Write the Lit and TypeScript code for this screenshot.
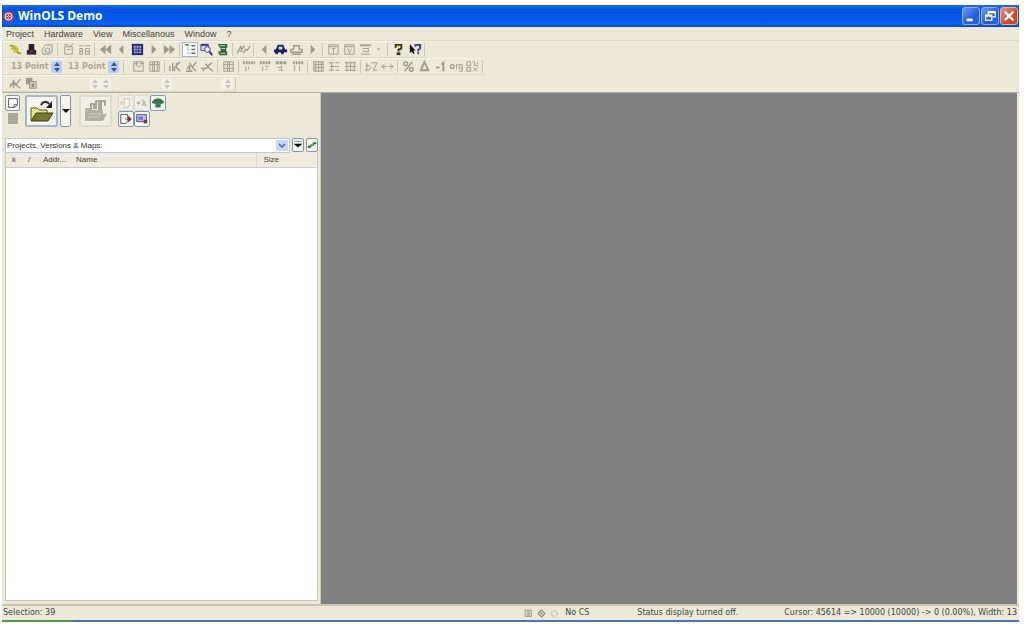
import { LitElement, html, css, svg, nothing } from "lit";
import { customElement, property } from "lit/decorators.js";

const G = "#9d9b8d";

/* Glyphs on a 16 x 16 grid. */
const glyphs: Record<string, unknown> = {
  plug: svg`<path d="M2 4h3l2 3 3 1v3l2 1h2" fill="none" stroke="#a3a524" stroke-width="2"/><path d="M3 7l4 1M6 11l4-4M7 4l4 4" stroke="#c2c433" stroke-width="2"/>`,
  hat: svg`<path d="M5 2h6v6l2 1v4H3V9l2-1z" fill="#2a2326"/><path d="M6 9h4v2H6z" fill="#7d3b3b"/><path d="M3 13h10" stroke="#4a4446"/>`,
  disc: svg`<path d="M2 8l4-5h7v8l-3 2H3z" fill="#e3e0d0" stroke="${G}"/><circle cx="8" cy="9" r="2.500" fill="none" stroke="${G}"/>`,
  props: svg`<path d="M4 5h8v8H4zM3 3h5M9 5l4-3M6 8h4" fill="none" stroke="${G}"/>`,
  pages: svg`<path d="M3 7h3v6H3zM9 7h4v6H9zM2 4h5M8 4h6M3 10h3M9 10h4" fill="none" stroke="${G}"/>`,
  first: svg`<path d="M8 3v10L2 8zM14 3v10L8 8z" fill="${G}"/>`,
  prev: svg`<path d="M10 3v10L5 8z" fill="${G}"/>`,
  next: svg`<path d="M6 3v10l5-5z" fill="${G}"/>`,
  last: svg`<path d="M2 3v10l6-5zM8 3v10l6-5z" fill="${G}"/>`,
  grid: svg`<path d="M2 2h12v12H2z" fill="#24256a"/><path d="M4 4h2v2H4zM7 4h2v2H7zM10 4h2v2h-2zM4 7h2v2H4zM7 7h2v2H7zM10 7h2v2h-2zM4 10h2v2H4zM7 10h2v2H7zM10 10h2v2h-2z" fill="#b3b8e4"/>`,
  tree: svg`<path d="M5 3v10M5 4h3M5 8h3M5 12h3" fill="none" stroke="#8b98a0" stroke-dasharray="1 1"/><path d="M2 3h4M9 4h4M9 8h4M9 12h4" stroke="#59656c" stroke-width="1.500"/>`,
  search: svg`<path d="M2 3h8v6H2z" fill="#d5d6ec" stroke="#4d4d83"/><path d="M2 3h8" stroke="#34347b" stroke-width="2"/><circle cx="9" cy="8" r="3" fill="#eef" stroke="#34347b"/><path d="M11 10l3 4" stroke="#34347b" stroke-width="2"/>`,
  scroll: svg`<path d="M3 2h10v4H5zM6 6h6v4H6zM3 10h10v4H5z" fill="#345f38"/><path d="M7 7h4M6 12h5M5 4h6" stroke="#d7e6c9"/>`,
  signal: svg`<path d="M1 12l4-7 1 3 3-4M8 12l2-4 2 1 3-5M4 10h3" fill="none" stroke="${G}" stroke-width="1.500"/>`,
  car: svg`<path d="M5 3h6l2 5h2v3h-3l-1 2h-2l-1-2H6l-1 2H3l-1-2H1V8h2z" fill="#20205e"/><path d="M6 5h4v3H6z" fill="#d5d8ee"/>`,
  carOff: svg`<path d="M5 4h6v4h3v3H2V8h3zM3 13h10" fill="none" stroke="${G}" stroke-width="1.500"/>`,
  winA: svg`<path d="M3 3h10v10H3zM3 5h10M6 7h4M8 7v5" fill="none" stroke="${G}"/>`,
  winB: svg`<path d="M3 3h10v10H3zM3 5h10M6 7l2 5 2-5" fill="none" stroke="${G}"/>`,
  winC: svg`<path d="M2 3h12M2 4h12M5 7h6M5 10h6M3 13h10M11 6v5" fill="none" stroke="${G}"/>`,
  dot: svg`<path d="M5 7h4l-2 2z" fill="${G}"/>`,
  help: svg`<path d="M5 6V3h6v4L8 8v2" fill="none" stroke="#34351f" stroke-width="2"/><path d="M6 11h4v3H6z" fill="#34351f"/><path d="M7 4h2v2H7z" fill="#d8d86c"/>`,
  whats: svg`<path d="M3 2v10l2-2 2 3 1-1-1-3h2z" fill="#111"/><path d="M9 5V3h5v4l-2 1v2M12 11v2" fill="none" stroke="#3e3a86" stroke-width="2"/>`,
  map: svg`<path d="M3 3h10v10H3zM3 5h4M9 5h4M6 3v4l3 2 2-3" fill="none" stroke="${G}"/>`,
  cols: svg`<path d="M3 3h10v10H3zM3 6h10M6 3v10M8 3v10M11 3v10" fill="none" stroke="${G}"/>`,
  barA: svg`<path d="M2 7v6M5 4v9M7 8v5M8 8l5-5M8 8l5 5M9 4v4" fill="none" stroke="${G}" stroke-width="1.500"/>`,
  barB: svg`<path d="M3 11l3-4v6M6 4l3 5 4-6M9 9l4 4M2 13h7" fill="none" stroke="${G}" stroke-width="1.500"/>`,
  barC: svg`<path d="M1 10h6l2-3 4-3M6 5l3 4 5 4M5 9l-2 4" fill="none" stroke="${G}" stroke-width="1.500"/>`,
  table: svg`<path d="M3 3h10v10H3zM3 6h10M3 10h10M7 3v10M9 3v10" fill="none" stroke="${G}"/>`,
  bitA: svg`<path d="M1 4h13" stroke="${G}" stroke-width="3" stroke-dasharray="2 1"/><path d="M4 8v5M7 8v3" stroke="${G}"/>`,
  bitB: svg`<path d="M2 4h12" stroke="${G}" stroke-width="3" stroke-dasharray="2 1"/><path d="M5 8v5M8 8h3M8 11h2" stroke="${G}"/>`,
  bitC: svg`<path d="M2 4h11" stroke="${G}" stroke-width="3" stroke-dasharray="3 1"/><path d="M4 9h3M5 12h5M8 7v4" stroke="${G}"/>`,
  bitD: svg`<path d="M3 4h11" stroke="${G}" stroke-width="3" stroke-dasharray="2 1"/><path d="M5 7v6M10 7v6" stroke="${G}"/>`,
  mesh: svg`<path d="M3 3h10v10H3zM3 6h10M3 9h10M5 3v10M8 3v10M11 3v10" fill="none" stroke="${G}"/>`,
  split: svg`<path d="M2 4h5M9 4h4M3 8h10M2 12h5M9 12h4M5 4v8" fill="none" stroke="${G}"/>`,
  bars: svg`<path d="M4 3v10M8 3v10M12 3v10M2 4h12M2 8h12M2 12h12" fill="none" stroke="${G}"/>`,
  wave: svg`<path d="M3 4v8M1 12h4l3-4M7 4h7l-4 8h4M2 7h4" fill="none" stroke="${G}"/>`,
  both: svg`<path d="M1 8h6M9 8h5M5 5L2 8l3 3M11 5l3 3-3 3" fill="none" stroke="${G}"/>`,
  percent: svg`<circle cx="5" cy="5" r="2" fill="none" stroke="${G}" stroke-width="1.500"/><circle cx="11" cy="11" r="2" fill="none" stroke="${G}" stroke-width="1.500"/><path d="M12 3L4 13" stroke="${G}" stroke-width="1.500"/>`,
  delta: svg`<path d="M8 3l4 9H4z" fill="none" stroke="${G}" stroke-width="2"/>`,
  minus: svg`<path d="M3 9h4M9 6l2-2v9" fill="none" stroke="${G}" stroke-width="2"/>`,
  org: svg`<circle cx="3.500" cy="8" r="2" fill="none" stroke="${G}" stroke-width="1.500"/><path d="M8 11V6h2M14 6h-3v4h3M14 6v7h-3" fill="none" stroke="${G}"/>`,
  diff: svg`<path d="M2 3h4v4H2zM2 9h4v4H2zM8 3h2v4h4M9 9l4 4M13 3v3M13 9l-4 4" fill="none" stroke="${G}"/>`,
  pen: svg`<path d="M2 12l4-6v7M5 5l4 4 4-6M8 9l5 4M2 9h7" fill="none" stroke="${G}" stroke-width="1.500"/>`,
  copy: svg`<path d="M2 2h7v7H2z" fill="${G}"/><path d="M6 6h7v7H6z" fill="#dcd9c9" stroke="#8d8b7d"/><path d="M8 8h3v4H8z" fill="#8d8b7d"/>`,
  doc: svg`<path d="M3 3h10v7l-3 3H3z" fill="#fff" stroke="#444"/><path d="M9 13v-3h4" fill="none" stroke="#444"/>`,
  cut: svg`<path d="M6 3h6v7l-2 3H6zM1 8h4M3 6v4" fill="#f5f3ea" stroke="#c0bdaf"/>`,
  pick: svg`<path d="M2 8h4M4 6v4M8 4l5 8M8 11l4-5" fill="none" stroke="#b5b2a4" stroke-width="1.500"/>`,
  home: svg`<path d="M1 8c1-7 13-7 14 0l-4 1v4H5V9z" fill="#2c7a3a"/><path d="M6 7h4v3H6z" fill="#5a62a8"/>`,
  exit: svg`<path d="M2 3h8v7l-2 3H2z" fill="#fff" stroke="#444"/><path d="M7 8h5M11 5l3 3-3 3z" stroke="#702c36" fill="#702c36"/>`,
  card: svg`<path d="M2 3h11v8H2z" fill="#b9bfe6" stroke="#3a3d80"/><path d="M4 6h5M4 8h5" stroke="#3a3d80"/><path d="M10 9h4v4h-4z" fill="#6b3b56"/>`,
  link: svg`<path d="M2 11h4V8h4V5h4M4 9l-2 2 2 2M12 3l2 2-2 2" fill="none" stroke="#1e7b2b" stroke-width="2"/>`,
  down: svg`<path d="M1 6h14l-7 6z" fill="#111"/><path d="M2 2h12" stroke="#555"/>`,
  box: svg`<path d="M2 2h11v11H2zM5 5h6M5 8h6M5 11h6" fill="none" stroke="#88867a" stroke-width="1.500"/>`,
  gear: svg`<path d="M8 2l6 6-6 6-6-6z" fill="none" stroke="#88867a" stroke-width="2"/><circle cx="8" cy="8" r="2" fill="#88867a"/>`,
  dim: svg`<circle cx="8" cy="8" r="5" fill="none" stroke="#b5b3a6" stroke-width="2" stroke-dasharray="3 1"/>`,
};

const row1 = ["plug", "hat", "disc", "|", "props", "pages", "|", "first", "prev", "grid", "next", "last", "|", "tree", "search", "scroll", "|", "signal", "|", "prev", "car", "carOff", "next", "|", "winA", "winB", "winC", "dot", "|", "help", "whats", "|"];
const row2 = ["|", " ", "map", "cols", "|", "barA", "barB", "barC", "|", "table", "|", "bitA", "bitB", "bitC", "bitD", "|", "mesh", "split", "bars", "|", "wave", "both", "|", "percent", "delta", "minus", "org", "diff", "|"];

const glyph = (name: string) => html`<svg viewBox="0 0 16 16" aria-hidden="true">${glyphs[name]}</svg>`;

@customElement("spin-box")
class SpinBox extends LitElement {
  @property() value = "";
  @property() label = "";
  @property({ type: Boolean }) active = false;

  static styles = css`
    :host { display: flex; align-items: center; }
    input { width: 40px; height: 14px; box-sizing: border-box; border: 0; padding: 0; background: none; color: #aaa899; font: bold 8px "DejaVu Sans", sans-serif; }
    .spin { display: grid; width: 11px; height: 12px; border-radius: 2px; background: #f3f1e8; color: #c8c5b8; }
    .spin.active { background: #b9cdfa; color: #3a5791; }
    button { display: flex; align-items: center; justify-content: center; border: 0; padding: 0; background: none; color: inherit; }
    svg { width: 6px; height: 4px; fill: currentColor; }
  `;

  render() {
    return html`
      ${this.value ? html`<input aria-label=${this.label} .value=${this.value} />` : nothing}
      <span class="spin ${this.active ? "active" : ""}">
        <button aria-label="Increase"><svg viewBox="0 0 6 4"><path d="M0 4l3-4 3 4z" /></svg></button>
        <button aria-label="Decrease"><svg viewBox="0 0 6 4"><path d="M0 0l3 4 3-4z" /></svg></button>
      </span>`;
  }
}

@customElement("app-root")
class AppRoot extends LitElement {
  static styles = css`
    :host { display: block; height: 100vh; box-sizing: border-box; padding: 5px 5px 3px 2px; background: #fff; font: 9px/12px "Liberation Sans", Arial, sans-serif; color: #444239; }
    * { box-sizing: border-box; }
    button { font: inherit; color: inherit; border: 0; padding: 0; margin: 0; background: none; display: flex; align-items: center; justify-content: center; flex: none; }
    svg { display: block; width: 14px; height: 14px; flex: none; }
    .window { height: 100%; display: flex; flex-direction: column; background: #ece9d8; }
    .title { height: 22px; flex: none; display: flex; align-items: center; gap: 4px; padding: 0 1px; background: linear-gradient(#1b6ef0, #0553dd 20%, #0558e8 65%, #0a63f4 85%, #0648c4); color: #fff; }
    .title svg { width: 11px; height: 11px; }
    h1 { flex: 1; margin: 0; font: bold 12px/20px "Open Sans", "Noto Sans", sans-serif; }
    .controls { display: flex; gap: 1px; }
    .controls button { width: 18px; height: 18px; border: 1px solid #8fb0f5; border-radius: 3px; background: linear-gradient(135deg, #6c9af5, #2459d8 60%, #2b66e5); }
    .controls svg { width: 14px; height: 14px; }
    .controls .close { background: linear-gradient(135deg, #ec9279, #d24a26 60%, #c6421f); border-color: #e9b1a5; }
    nav { display: flex; height: 14px; flex: none; align-items: center; gap: 10px; padding: 0 4px; border-bottom: 1px solid #dedbc9; }
    nav button { line-height: 12px; }
    .bar { display: flex; align-items: center; height: 17px; flex: none; padding-left: 4px; border-top: 1px solid #f7f5eb; border-bottom: 1px solid #d9d6c4; border-left: 1px solid #dedbc9; align-self: flex-start; }
    .tool { width: 16px; height: 15px; }
    .tool svg { width: 15px; height: 15px; }
    .tool.tree { background: #fbfbf8; border: 1px solid #a7b7c8; }
    .tool.dot { width: 12px; }
    .sep { width: 5px; height: 13px; flex: none; display: flex; justify-content: center; }
    .sep::before { content: ""; width: 1px; background: #cbc8b8; }
    .space { width: 4px; }
    .fields { display: flex; gap: 6px; padding: 0 2px 0 4px; }
    .spins { display: flex; align-items: center; gap: 50px; padding-left: 50px; }
    .pair { display: flex; }
    .work { flex: 1; min-height: 0; display: flex; border-top: 1px solid #b4b1a2; }
    aside { width: 319px; flex: none; display: flex; flex-direction: column; padding: 2px 2px 3px 3px; border-right: 1px solid #c9c6b7; }
    main { flex: 1; background: #808080; margin-right: 2px; }
    .actions { display: flex; height: 43px; align-items: flex-start; }
    .stack { display: grid; gap: 2px; justify-items: center; width: 15px; margin-right: 5px; }
    .framed { border: 1px solid #8196ad; border-radius: 2px; background: #f6f5ee; }
    .small { width: 16px; height: 16px; }
    .stack .small { width: 15px; }
    .stop { width: 10px; height: 11px; background: #aaa899; }
    .large { width: 33px; height: 32px; border-width: 2px; border-color: #a8b7c7; }
    .large svg { width: 28px; height: 28px; }
    .menu { width: 11px; height: 32px; margin: 0 8px 0 2px; }
    .menu svg { width: 8px; height: 8px; }
    .framed.off { border-color: #dedbcc; background: #f1efe5; }
    .minis { display: grid; grid-template-columns: repeat(3, 16px); margin-left: 6px; }
    .chooser { display: flex; gap: 2px; height: 15px; }
    .combo { position: relative; flex: 1; display: flex; }
    select { appearance: none; width: 100%; height: 15px; margin: 0; padding: 0 14px 0 1px; border: 1px solid #bcc8d2; border-radius: 0; background: #fff; color: #333; font: 8px/12px "Liberation Sans", Arial, sans-serif; }
    .arrow { position: absolute; right: 2px; top: 2px; width: 12px; height: 11px; background: #c5d5fb; border-radius: 1px; pointer-events: none; display: flex; align-items: center; justify-content: center; }
    .arrow svg { width: 8px; height: 8px; }
    .chooser button { width: 12px; height: 14px; }
    .chooser button svg { width: 10px; height: 10px; }
    .list { flex: 1; background: #fff; border: 1px solid #c8c5b5; border-top: 0; }
    table { width: 100%; border-collapse: collapse; table-layout: fixed; }
    th { height: 14px; padding: 0 0 0 2px; background: #efecdf; border-bottom: 1px solid #d0cdbd; text-align: left; font: 8px/12px "Liberation Sans", Arial, sans-serif; white-space: nowrap; overflow: hidden; }
    .flag { width: 20px; padding-left: 6px; }
    .mark { width: 15px; }
    .addr { width: 33px; }
    .size { width: 61px; padding-left: 7px; border-left: 1px solid #dad7c8; }
    footer { flex: none; display: flex; align-items: center; height: 18px; border-top: 2px solid #c6c3b4; border-bottom: 2px solid #4a74b8; padding: 0 2px 0 1px; white-space: nowrap; font: 8px/12px "DejaVu Sans", sans-serif; }
    .selection { flex: 1; }
    .lamps { display: flex; gap: 4px; margin-right: 6px; }
    .lamps svg { width: 9px; height: 9px; }
    .state { margin: 0 46px 0 48px; }
    .progress { position: relative; height: 0; }
    .progress::before { content: ""; position: absolute; left: 0; bottom: 0; width: 71px; height: 2px; background: #4f9a4b; }
  `;

  private tool(name: string) {
    if (name === "|") return html`<span class="sep"></span>`;
    if (name === " ") return html`<span class="space"></span>`;
    return html`<button class="tool ${name}" aria-label=${name}>${glyph(name)}</button>`;
  }

  private small(name: string, off = false) {
    return html`<button class="small framed ${off ? "off" : ""}" aria-label=${name}>${glyph(name)}</button>`;
  }

  render() {
    return html`
      <div class="window">
        <header class="title">
          <svg viewBox="0 0 12 12"><circle cx="6" cy="6" r="5" fill="#f1d9d6" stroke="#c9352f" stroke-width="1.500"/><circle cx="6" cy="6" r="2.500" fill="none" stroke="#8e3a48"/><path d="M4 4l4 4M8 4l-4 4" stroke="#8e3a48"/></svg>
          <h1>WinOLS Demo</h1>
          <div class="controls">
            <button aria-label="Minimize"><svg viewBox="0 0 16 16"><path d="M3 11h7v3H3z" fill="#fff"/></svg></button>
            <button aria-label="Restore"><svg viewBox="0 0 16 16"><path d="M6 6V3h8v6h-3M6 4h8M3 7h7v6H3zM3 8h7" fill="none" stroke="#fff" stroke-width="1.500"/></svg></button>
            <button class="close" aria-label="Close"><svg viewBox="0 0 16 16"><path d="M3 3l10 10M13 3L3 13" stroke="#fff" stroke-width="2.500"/></svg></button>
          </div>
        </header>
        <nav>${["Project", "Hardware", "View", "Miscellanous", "Window", "?"].map((m) => html`<button>${m}</button>`)}</nav>
        <div class="bar">${row1.map((n) => this.tool(n))}</div>
        <div class="bar">
          <div class="fields">
            <spin-box value="13 Point" label="Row font size" active></spin-box>
            <spin-box value="13 Point" label="Column font size" active></spin-box>
          </div>
          ${row2.map((n) => this.tool(n))}
        </div>
        <div class="bar">
          ${this.tool("pen")}${this.tool("copy")}
          <div class="spins">
            <span class="pair"><spin-box></spin-box><spin-box></spin-box></span>
            <spin-box></spin-box>
            <spin-box></spin-box>
          </div>
          ${this.tool("|")}
        </div>
        <div class="work">
          <aside>
            <div class="actions">
              <div class="stack">${this.small("doc")}<button class="stop" aria-label="Stop"></button></div>
              <button class="large framed" aria-label="Open project">
                <svg viewBox="0 0 28 28"><path d="M3 23V11h6l2 2h8v4" fill="#e8e68a" stroke="#55541c"/><path d="M3 24l5-8h17l-5 8z" fill="#77752a" stroke="#3e3d14"/><path d="M13 8c2-4 6-4 8-1" fill="none" stroke="#222" stroke-width="2"/><path d="M24 4v7h-6z" fill="#222"/></svg>
              </button>
              <button class="menu framed" aria-label="Recent projects"><svg viewBox="0 0 8 8"><path d="M0 2h8L4 6z" fill="#111"/></svg></button>
              <button class="large framed off" aria-label="Import">
                <svg viewBox="0 0 28 28"><path d="M3 11h6l2 2h10v4h4l-4 7H3z" fill="#b4b1a3"/><path d="M9 12V7h3v5M14 12V4h3v9M19 13V4h4v5" fill="none" stroke="#a9a698" stroke-width="2"/><path d="M7 17h13M6 20h12" stroke="#d3d0c3"/></svg>
              </button>
              <div class="minis">
                ${this.small("cut", true)}${this.small("pick", true)}${this.small("home")}${this.small("exit")}${this.small("card")}
              </div>
            </div>
            <div class="chooser">
              <div class="combo">
                <select aria-label="View"><option>Projects, Versions &amp; Maps:</option></select>
                <span class="arrow"><svg viewBox="0 0 8 8"><path d="M1 2l3 3 3-3" fill="none" stroke="#4d6185" stroke-width="1.500"/></svg></span>
              </div>
              <button class="framed" aria-label="Filter">${glyph("down")}</button>
              <button class="framed" aria-label="Refresh">${glyph("link")}</button>
            </div>
            <div class="list">
              <table>
                <thead><tr><th class="flag">k</th><th class="mark">/</th><th class="addr">Addr...</th><th>Name</th><th class="size">Size</th></tr></thead>
                <tbody></tbody>
              </table>
            </div>
          </aside>
          <main></main>
        </div>
        <footer>
          <span class="selection">Selection: 39</span>
          <span class="lamps">${glyph("box")}${glyph("gear")}${glyph("dim")}</span>
          <span>No CS</span>
          <span class="state">Status display turned off.</span>
          <span>Cursor: 45614 =&gt; 10000 (10000) -&gt; 0 (0.00%), Width: 13</span>
        </footer>
        <div class="progress"></div>
      </div>`;
  }
}
